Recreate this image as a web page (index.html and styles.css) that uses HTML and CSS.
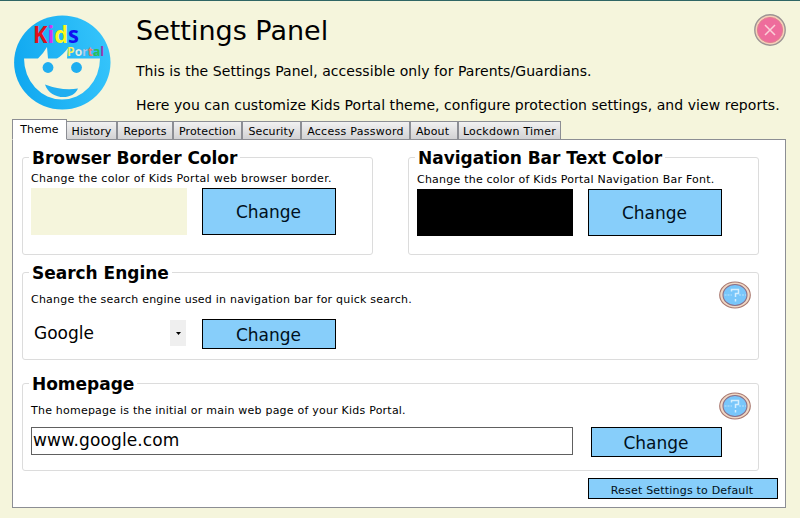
FILE: index.html
```html
<!DOCTYPE html>
<html lang="en">
<head>
<meta charset="utf-8">
<title>Settings Panel</title>
<link rel="stylesheet" href="styles.css">
</head>
<body>
<header class="header">
  <svg class="logo" width="98" height="96" viewBox="0 0 98 96">
    <defs><linearGradient id="sky" x1="0" y1=".6" x2="1" y2=".4"><stop offset="0" stop-color="#10a8f0"/><stop offset="1" stop-color="#35c4fb"/></linearGradient></defs>
    <ellipse cx="48.3" cy="47.5" rx="48.2" ry="47" fill="url(#sky)"/>
    <path d="M10 43.500H24Q29 39 33 32L34 43.500H43Q49 40 54 33L53 43.500H86A38 41 0 0 1 10 43.500Z" fill="#f5f5dc"/>
    <circle cx="34" cy="52.500" r="5.400" fill="#20aef0"/>
    <circle cx="62.500" cy="52.500" r="5.400" fill="#20aef0"/>
    <path d="M31 69.500Q48 76 64 73.500C59 86 36 85 31 69.500Z" fill="#20aef0"/>
    <g class="logo-kids"><text x="19" y="28" textLength="46" lengthAdjust="spacingAndGlyphs"><tspan fill="#e0101c">K</tspan><tspan fill="#d030f4">i</tspan><tspan fill="#fcf820">d</tspan><tspan fill="#1010f0">s</tspan></text></g>
    <g class="logo-portal"><text x="53" y="41" textLength="37" lengthAdjust="spacingAndGlyphs"><tspan fill="#fcf460">P</tspan><tspan fill="#e4f4e8">o</tspan><tspan fill="#a8d0f8">r</tspan><tspan fill="#ec8070">t</tspan><tspan fill="#20c850">a</tspan><tspan fill="#a030b0">l</tspan></text></g>
  </svg>
  <div class="intro">
    <h1>Settings Panel</h1>
    <p class="line-one">This is the Settings Panel, accessible only for Parents/Guardians.</p>
    <p class="line-two">Here you can customize Kids Portal theme, configure protection settings, and view reports.</p>
  </div>
  <svg class="close" width="32" height="32" viewBox="0 0 32 32">
    <circle cx="16" cy="16" r="15.200" fill="#f6d0b8" stroke="#9c9494" stroke-width="1.400"/>
    <circle cx="16" cy="16" r="12.600" fill="#ee6c9c" stroke="#e08090" stroke-width="1"/>
    <path d="M11 11L21 21M21 11L11 21" stroke="#fbd0d8" stroke-width="1.500"/>
  </svg>
</header>
<nav class="tabs">
  <div class="tab active"><span>Theme</span></div>
  <div class="tab history"><span>History</span></div>
  <div class="tab reports"><span>Reports</span></div>
  <div class="tab protection"><span>Protection</span></div>
  <div class="tab security"><span>Security</span></div>
  <div class="tab access"><span>Access Password</span></div>
  <div class="tab about"><span>About</span></div>
  <div class="tab lockdown"><span>Lockdown Timer</span></div>
</nav>
<main class="panel">
  <div class="pair">
    <section class="group border-color">
      <h2>Browser Border Color</h2>
      <p>Change the color of Kids Portal web browser border.</p>
      <div class="row"><div class="swatch beige"></div><button class="btn tall">Change</button></div>
    </section>
    <section class="group text-color">
      <h2>Navigation Bar Text Color</h2>
      <p>Change the color of Kids Portal Navigation Bar Font.</p>
      <div class="row"><div class="swatch black"></div><button class="btn tall">Change</button></div>
    </section>
  </div>
  <section class="group search">
    <h2>Search Engine</h2>
    <p>Change the search engine used in navigation bar for quick search.</p>
    <div class="row"><div class="select"><span>Google</span><i class="arrow"><svg width="5" height="3" viewBox="0 0 5 3"><path d="M0 0H5L2.500 3Z"/></svg></i></div><button class="btn low">Change</button></div>
    <svg class="help" width="32" height="28" viewBox="0 0 32 28">
      <ellipse cx="16" cy="14" rx="15.300" ry="13" fill="#f0d8c4" stroke="#a87870" stroke-width="1.100"/>
      <ellipse cx="16" cy="14" rx="12" ry="10.500" fill="#78c6fa" stroke="#8c7088" stroke-width="1.100"/>
      <path d="M5.500 14H13M20 14H27" stroke="#b8e2fc" stroke-width="1.200" stroke-dasharray="2 1"/>
      <path d="M12.500 10.500V8.500H19.500V12.500H16.500V16M16.500 18V20.500" fill="none" stroke="#d4eefe" stroke-width="1.500"/>
    </svg>
  </section>
  <section class="group home">
    <h2>Homepage</h2>
    <p>The homepage is the initial or main web page of your Kids Portal.</p>
    <div class="row"><div class="field"><span>www.google.com</span></div><button class="btn low">Change</button></div>
    <svg class="help" width="32" height="28" viewBox="0 0 32 28">
      <ellipse cx="16" cy="14" rx="15.300" ry="13" fill="#f0d8c4" stroke="#a87870" stroke-width="1.100"/>
      <ellipse cx="16" cy="14" rx="12" ry="10.500" fill="#78c6fa" stroke="#8c7088" stroke-width="1.100"/>
      <path d="M5.500 14H13M20 14H27" stroke="#b8e2fc" stroke-width="1.200" stroke-dasharray="2 1"/>
      <path d="M12.500 10.500V8.500H19.500V12.500H16.500V16M16.500 18V20.500" fill="none" stroke="#d4eefe" stroke-width="1.500"/>
    </svg>
  </section>
  <button class="reset"><span>Reset Settings to Default</span></button>
</main>
</body>
</html>
```
FILE: styles.css
```css
* { box-sizing: border-box; }
body {
  margin: 0;
  width: 800px;
  height: 518px;
  overflow: hidden;
  background: #f5f5dc;
  border-top: 1px solid #2f6664;
  color: #000;
  font-family: Verdana, "DejaVu Sans", sans-serif;
  white-space: nowrap;
}
h1, h2, p { margin: 0; font-weight: normal; }
.header { display: flex; height: 118px; padding: 0 14px; }
.logo { margin-top: 14px; }
.logo-kids { font: bold 24px "Open Sans", sans-serif; }
.logo-portal { font: bold 13px "Open Sans", sans-serif; stroke: #60788c; stroke-width: .15; }
.intro { width: 642px; margin-left: 24px; }
h1 { margin-top: 12px; font-size: 27px; line-height: 36px; }
.line-one, .line-two { font-size: 14px; line-height: 20px; letter-spacing: .055px; }
.line-one { margin-top: 12px; }
.line-two { margin-top: 14px; }
.close { flex: none; margin: 13px 0 0 -24px; }
.tabs { display: flex; align-items: flex-end; height: 21px; margin-left: 12px; position: relative; z-index: 1; }
.tab {
  height: 19px;
  border: 1px solid #8c8e94;
  background: linear-gradient(#f1f1f1, #d2d2d4);
  font-size: 11px;
  line-height: 19px;
  text-align: center;
  letter-spacing: .12px;
}
.tab.active { width: 55px; height: 21px; background: #fff; border-bottom-color: #fff; line-height: 19px; }
.history { width: 50px; border-left: 0; }
.reports { width: 56px; }
.protection { width: 69px; }
.security { width: 59px; }
.access { width: 109px; letter-spacing: .27px; }
.about { width: 48px; padding-right: 3px; }
.lockdown { width: 103px; letter-spacing: .25px; }
.panel {
  width: 774px;
  height: 369px;
  margin: -1px 0 0 12px;
  padding: 17px 7px 0 9px;
  background: #fff;
  border: 1px solid #8c8e94;
}
.pair { display: flex; gap: 35px; }
.group { position: relative; height: 88px; padding-left: 8px; border: 1px solid #dcdcdc; border-radius: 3px; width: 737px; }
.pair .group { width: 351px; height: 98px; }
h2 {
  width: max-content;
  margin: -12px 0 0 -2px;
  padding: 0 3px 1px;
  background: #fff;
  font-size: 17px;
  font-weight: bold;
  line-height: 24px;
  letter-spacing: -.02px;
}
.group p { font-size: 11px; line-height: 14px; letter-spacing: .22px; }
.border-color p { margin-top: 1px; letter-spacing: .29px; }
.text-color p { margin-top: 2px; }
.row { display: flex; }
.pair .row { gap: 15px; margin-top: 2px; }
.swatch { width: 156px; height: 47px; }
.beige { background: #f5f5dc; }
.black { background: #000; }
.btn, .reset { border: 1px solid #000; background: #87cefa; color: #001020; font-family: inherit; padding: 0; }
.btn { width: 134px; height: 30px; font-size: 17px; line-height: 28px; padding-right: 1px; }
.btn.tall { height: 47px; }
.btn.low { padding-top: 1px; }
.search, .home { margin-top: 17px; }
.home { margin-top: 23px; }
.search p, .home p { margin-top: 7px; }
.search .row { margin-top: 12px; gap: 16px; }
.select { display: flex; width: 155px; height: 26px; margin-top: 1px; padding-left: 3px; justify-content: space-between; font-size: 17px; line-height: 26px; }
.arrow { display: flex; align-items: center; justify-content: center; width: 16px; background: #efefef; }
.help { position: absolute; right: 7px; top: 8px; }
.home .row { margin-top: 9px; gap: 18px; }
.home .btn { width: 131px; }
.field { width: 542px; height: 28px; padding-left: 1px; border: 1px solid #606060; font-size: 17px; line-height: 25px; letter-spacing: .12px; }
.reset { display: block; width: 190px; height: 21px; margin: 7px 0 0 auto; padding-right: 2px; font-size: 11px; line-height: 20px; letter-spacing: .2px; overflow: hidden; }
.reset span { display: block; height: 15px; overflow: hidden; }
```
